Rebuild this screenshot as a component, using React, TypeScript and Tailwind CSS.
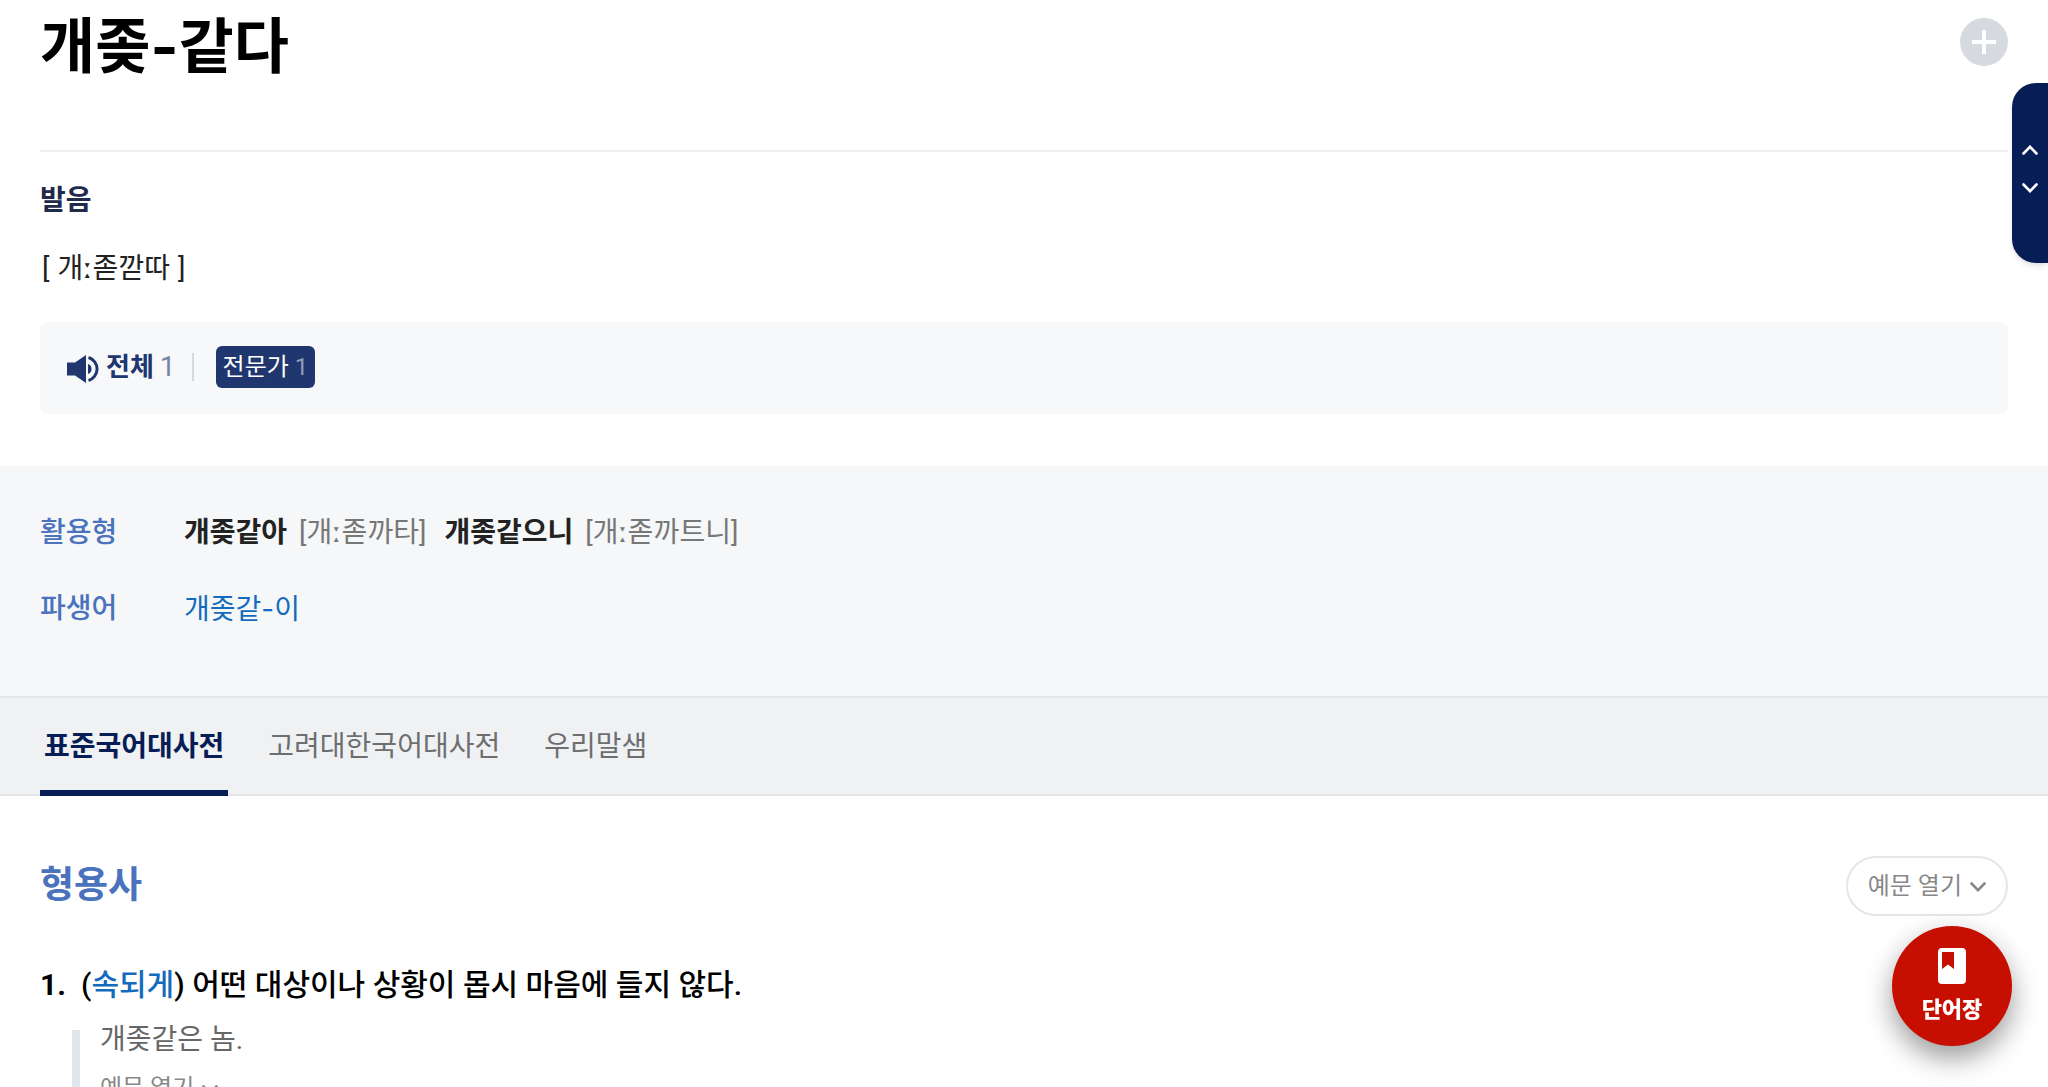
import { Fragment, ReactNode } from "react";

const dictionaries = ["표준국어대사전", "고려대한국어대사전", "우리말샘"];

const conjugations = [
    { form: "개좆같아", sound: "개ː졷까타" },
    { form: "개좆같으니", sound: "개ː졷까트니" },
];

const Chevron = ({ className, up = false }: { className: string; up?: boolean }) => (
    <svg viewBox="0 0 16 10" fill="none" stroke="currentColor" strokeWidth="2.6" strokeLinecap="round" className={className} aria-hidden="true">
        <path d={up ? "M1.500 8.500 8 1.800 14.500 8.500" : "M1.500 1.500 8 8.200 14.500 1.500"} />
    </svg>
);

// The length mark needs a font that draws it as two triangles
const Sound = ({ text }: { text: string }) => (
    <>
        {text.split("ː").map((part, i) => (
            <Fragment key={part}>
                {i > 0 && <span className="font-['DejaVu_Sans',sans-serif]">ː</span>}
                {part}
            </Fragment>
        ))}
    </>
);

const InfoRow = ({ label, children }: { label: string; children: ReactNode }) => (
    <div className="flex items-center">
        <dt className="w-36 shrink-0 font-medium text-[#4a72bd]">{label}</dt>
        <dd className="flex items-center">{children}</dd>
    </div>
);

const EntryHeader = () => (
    <header className="mx-10 flex h-38 items-start justify-between border-b-2 border-[#eeeff0]">
        <h1 className="font-[Inter,'Noto_Sans_CJK_KR',sans-serif] text-[60px] leading-[92px] font-bold">개좆-같다</h1>
        <button type="button" aria-label="단어장에 추가" className="mt-[18px] flex size-12 items-center justify-center rounded-full bg-[#d6dade] text-white">
            <svg viewBox="0 0 24 24" stroke="currentColor" strokeWidth="4" className="size-6" aria-hidden="true">
                <path d="M0 12H24M12 0V24" />
            </svg>
        </button>
    </header>
);

const Pronunciation = () => (
    <section className="px-10 pt-[29px] pb-13">
        <h2 className="text-[28px] leading-10 font-bold text-[#1f2a4d]">발음</h2>
        <p className="mt-7 flex gap-2 pl-0.5 text-[28px] leading-10 text-[#222]">
            <span>[</span>
            <span><Sound text="개ː졷깓따" /></span>
            <span>]</span>
        </p>
        <div className="mt-[33px] flex h-[92px] items-center rounded-lg bg-[#f6f8fa] px-[26px] pb-0.5">
            <button type="button" className="flex items-center text-[26px] leading-9 font-bold text-[#20366f]">
                <svg viewBox="0 0 34 30" className="mt-1 mr-1.5 h-[30px] w-[34px]" aria-hidden="true">
                    <path fill="currentColor" d="M1 8.5H9L20 1V29L9 21.5H1Z" />
                    <path fill="currentColor" d="M22 10A5.3 5.3 0 0 1 22 20Z" />
                    <path fill="none" stroke="currentColor" strokeWidth="3" d="M22.500 3.500A12 12 0 0 1 22.500 26.500" />
                </svg>
                전체
                <span className="ml-1.5 text-[28px] font-normal text-[#7585a6]">1</span>
            </button>
            <span className="mr-[22px] ml-4 h-7 w-0.5 bg-[#d5d8dd]"></span>
            <button type="button" className="flex h-[42px] items-center rounded-md bg-[#20366f] px-[7px] text-2xl text-white">
                전문가
                <span className="ml-1.5 text-[#8f9bb9]">1</span>
            </button>
        </div>
    </section>
);

const WordInfo = () => (
    <dl className="flex h-[230px] flex-col gap-9 bg-[#f5f7f9] px-10 pt-[47px] text-[28px] leading-10">
        <InfoRow label="활용형">
            {conjugations.map((c) => (
                <span key={c.form} className="mr-[18px]">
                    <b className="mr-3 font-bold text-[#222]">{c.form}</b>
                    <span className="text-[#777]">[<Sound text={c.sound} />]</span>
                </span>
            ))}
        </InfoRow>
        <InfoRow label="파생어">
            <a href="#derived" className="font-[Inter,'Noto_Sans_CJK_KR',sans-serif] text-[#146bbd]">개좆같-이</a>
        </InfoRow>
    </dl>
);

const DictionaryTabs = () => (
    <nav className="flex h-[100px] gap-9 border-t-2 border-b-2 border-[#e3e6e8] bg-[#eff1f3] px-10 text-[28px]">
        {dictionaries.map((name, i) => (
            <button
                key={name}
                type="button"
                className={
                    i === 0
                        ? "-mb-0.5 border-b-6 border-[#071d55] px-1 pt-1.5 font-bold text-[#071d55]"
                        : "-mb-0.5 border-b-6 border-transparent px-1 pt-1.5 text-[#6d6e70]"
                }
            >
                {name}
            </button>
        ))}
    </nav>
);

const Meaning = () => (
    <section className="px-10 pt-[60px]">
        <div className="flex items-start justify-between">
            <h2 className="text-[37px] leading-[60px] font-bold text-[#4a72bd]">형용사</h2>
            <button type="button" className="flex h-[60px] items-center gap-2 rounded-full border-2 border-[#e6e6e8] px-5 text-2xl text-[#888]">
                예문 열기
                <Chevron className="mt-0.5 h-[10px] w-4" />
            </button>
        </div>
        <ol>
            <li className="mt-[45px]">
                <div className="flex text-[30px] leading-12 font-medium">
                    <span className="w-[41px] font-bold">1.</span>
                    <p>
                        (<a href="#vulgar" className="text-[#146bbd]">속되게</a>) 어떤 대상이나 상황이 몹시 마음에 들지 않다.
                    </p>
                </div>
                <div className="mt-[21px] ml-8 flex flex-col items-start border-l-8 border-[#dfe6ee] pl-5">
                    <p className="-mt-2.5 text-[28px] leading-10 text-[#666]">개좆같은 놈.</p>
                    <button type="button" className="mt-2 flex items-center gap-2 text-2xl leading-10 text-[#888]">
                        예문 열기
                        <Chevron className="mt-1 h-[10px] w-4" />
                    </button>
                </div>
            </li>
        </ol>
    </section>
);

export default function App() {
    return (
        <main
            lang="ko"
            className="relative h-screen overflow-hidden bg-white font-[Roboto,'Noto_Sans_CJK_KR',sans-serif] text-black"
        >
            <EntryHeader />
            <Pronunciation />
            <WordInfo />
            <DictionaryTabs />
            <Meaning />

            {/* Floating controls */}
            <div className="fixed top-[83px] right-0 flex h-[180px] w-9 flex-col items-center justify-center gap-7 rounded-l-3xl bg-[#071d55] pb-2 text-white shadow-md">
                <button type="button" aria-label="위로" className="flex">
                    <Chevron up className="h-[10px] w-4" />
                </button>
                <button type="button" aria-label="아래로" className="flex">
                    <Chevron className="h-[10px] w-4" />
                </button>
            </div>
            <button type="button" className="fixed right-9 bottom-[41px] flex size-30 flex-col items-center rounded-full bg-[#c60f00] pt-[22px] text-white shadow-[0_12px_28px_rgba(0,0,0,0.4)]">
                <svg viewBox="0 0 28 36" className="h-9 w-7" aria-hidden="true">
                    <path fill="currentColor" fillRule="evenodd" d="M4 0H24a4 4 0 0 1 4 4V32a4 4 0 0 1-4 4H4a4 4 0 0 1-4-4V4a4 4 0 0 1 4-4ZM4 4V21L10 16.500 16 21V4Z" />
                </svg>
                <span className="mt-2.5 text-[22px] leading-8 font-black">단어장</span>
            </button>
        </main>
    );
}
